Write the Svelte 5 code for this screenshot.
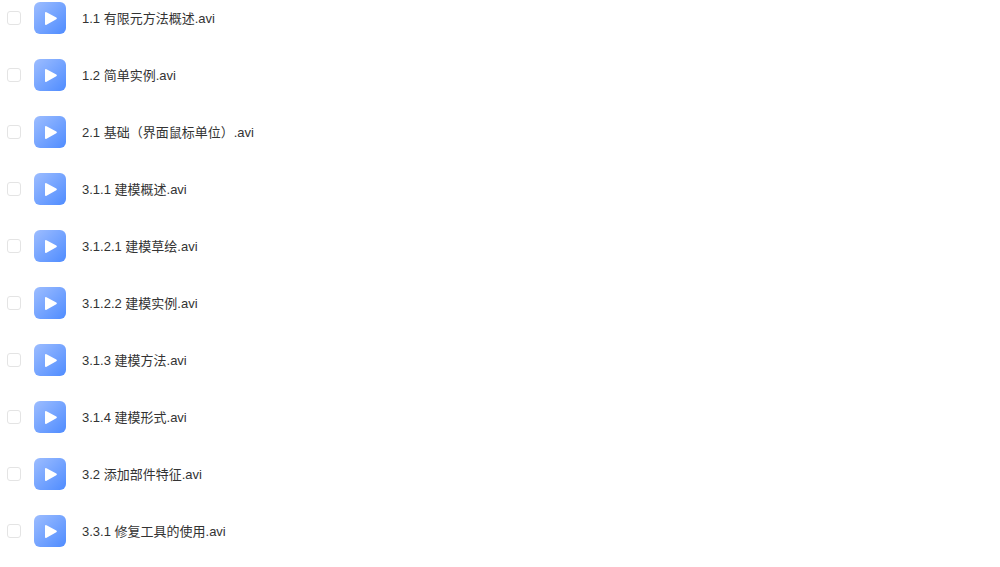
<script>
    const files = [
        "1.1 有限元方法概述.avi",
        "1.2 简单实例.avi",
        "2.1 基础（界面鼠标单位）.avi",
        "3.1.1 建模概述.avi",
        "3.1.2.1 建模草绘.avi",
        "3.1.2.2 建模实例.avi",
        "3.1.3 建模方法.avi",
        "3.1.4 建模形式.avi",
        "3.2 添加部件特征.avi",
        "3.3.1 修复工具的使用.avi"
    ];
</script>

<ul class="list">
    {#each files as name}
        <li class="row">
            <span class="check"></span>
            <span class="thumb">
                <svg width="32" height="32" viewBox="0 0 32 32">
                    <path d="M11 11 a1 1 0 0 1 1.5 -.8 l9.8 5.4 a1 1 0 0 1 0 1.7 l-9.8 5.4 a1 1 0 0 1 -1.5 -.8 z" fill="#fff" />
                </svg>
            </span>
            <span class="name">{name}</span>
        </li>
    {/each}
</ul>

<style>
    :global(body) {
        background-color: white;
    }

    .list {
        list-style: none;
        margin: 0;
        padding: 2px 0 0 7px;
        display: flex;
        flex-direction: column;
        gap: 25px;
    }

    .row {
        display: flex;
        align-items: center;
        height: 32px;
    }

    .check {
        width: 14px;
        height: 14px;
        box-sizing: border-box;
        border: 1px solid #e4e4e4;
        border-radius: 3px;
        margin-right: 13px;
    }

    .thumb {
        width: 32px;
        height: 32px;
        border-radius: 6px;
        background: linear-gradient(135deg, #9dbdff, #4f8cff);
        margin-right: 16px;
    }

    .thumb svg {
        display: block;
    }

    .name {
        font-family: "Liberation Sans", "Noto Sans CJK SC", sans-serif;
        font-size: 13px;
        color: #333;
        margin-bottom: 2px;
    }
</style>
